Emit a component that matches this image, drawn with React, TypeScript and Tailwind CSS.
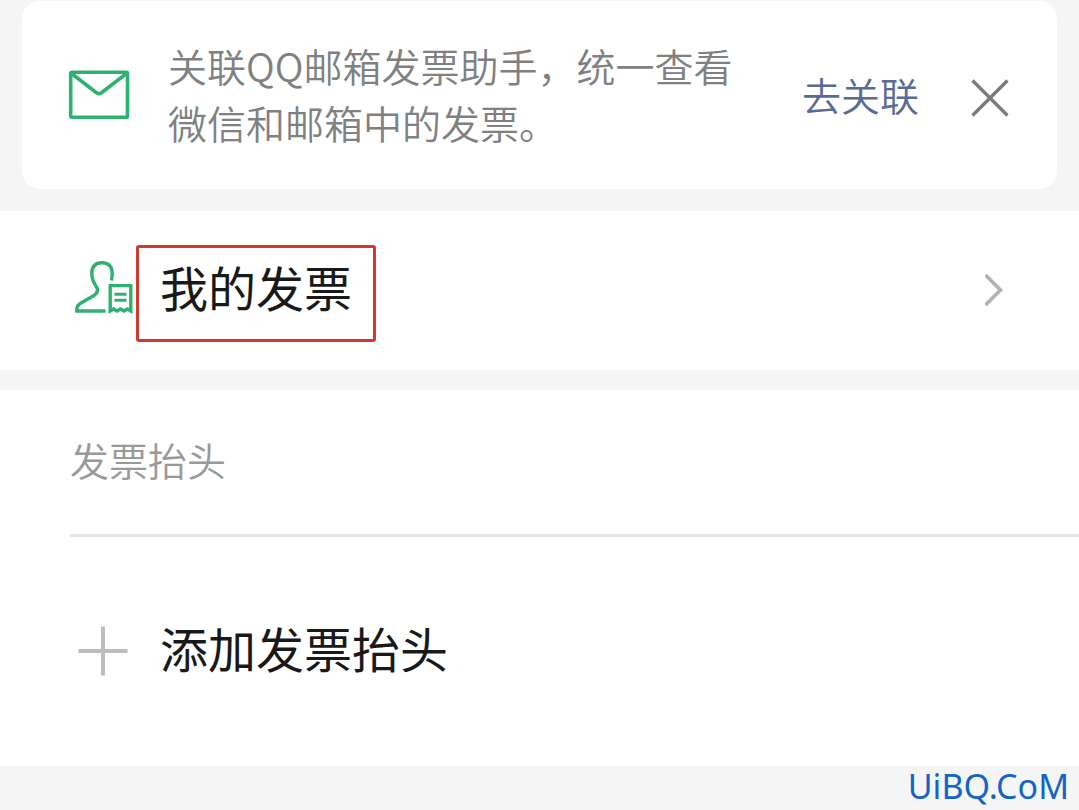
import React from 'react';

function MailIcon() {
  return (
    <svg className="w-[62px] h-[54px] shrink-0" viewBox="0 -3 62 54" fill="none" stroke="#2fb271" strokeWidth="3.6" strokeLinejoin="round" strokeLinecap="round" aria-hidden="true">
      <rect x="2.7" y="2.2" width="56.8" height="45" rx="1" />
      <path d="M3.5 3.5 L28.5 22.7 Q31 24.5 33.5 22.7 L58.5 3.5" />
    </svg>
  );
}

function PersonInvoiceIcon() {
  return (
    <svg className="w-[60px] h-[54px] shrink-0" viewBox="0 1 60 54" fill="none" stroke="#2fb271" strokeWidth="3.4" aria-hidden="true">
      <path d="M31.5 51 H2.8 C2.2 47 4 44.8 7 43 L20 35.5 C24 32.5 24.5 30 22.5 27 C19.5 22.5 17.8 19 17.8 13.5 C17.8 6 22 2.7 28 2.7 C34.5 2.7 38.2 6.5 38.2 13 C38.2 15.5 38 18 37.5 20.5" />
      <path d="M36.2 51 V25.6 H56.8 V51 L53.4 49 L50 51 L46.5 49 L43.1 51 L39.6 49 Z" />
      <path d="M40.5 34.2 H52.5 M40.5 40.2 H52.5" strokeWidth="3" />
    </svg>
  );
}

function App() {
  return (
    <div className="min-h-screen bg-[#f5f5f5] pt-px font-['Noto_Sans_CJK_SC',sans-serif]">
      <section className="mx-[22px] flex items-center rounded-[18px] bg-white pl-[46px] pr-[47px] pt-9 pb-[38px]">
        <MailIcon />
        <p className="ml-[38px] flex-1 text-[39px] leading-[57px] font-[350] text-[#808080]">
          关联QQ邮箱发票助手，统一查看
          <br />
          微信和邮箱中的发票。
        </p>
        <a href="#link" className="text-[39px] leading-[57px] font-[350] text-[#576b95]">去关联</a>
        <button type="button" aria-label="关闭" className="ml-[51px] pt-2">
          <svg className="w-10 h-10" viewBox="0 0 40 40" fill="none" stroke="#7a7a7a" strokeWidth="3.2" aria-hidden="true">
            <path d="M2.5 2.5 L37.5 37.5 M37.5 2.5 L2.5 37.5" />
          </svg>
        </button>
      </section>

      <a href="#invoices" className="mt-[22px] flex items-center bg-white px-[74px] pt-[34px] pb-7">
        <span className="pb-3">
          <PersonInvoiceIcon />
        </span>
        <span className="ml-0.5 rounded-[3px] border-[3px] border-[#d5372e] px-[21px] pt-[5px] pb-5 text-[48px] leading-[66px] text-[#191919]">
          我的发票
        </span>
        <span className="ml-auto pb-2">
          <svg className="w-5 h-9" viewBox="0 0 20 36" fill="none" stroke="#b2b2b2" strokeWidth="3.6" aria-hidden="true">
            <path d="M0.5 3 L15.5 18 L0.5 33" />
          </svg>
        </span>
      </a>

      <section className="mt-5 bg-white pl-[70px]">
        <h2 className="border-b-[3px] border-[#e5e5e5] pt-[41px] pb-[46px] text-[39px] leading-[57px] font-[350] text-[#999999]">
          发票抬头
        </h2>
        <button type="button" className="flex w-full items-center pl-2 pt-[77px] pb-[78px] text-[48px] leading-[66px] text-[#191919]">
          <svg className="mr-8 w-[50px] h-[50px]" viewBox="0 0 50 50" fill="none" stroke="#bdbdbd" strokeWidth="4" aria-hidden="true">
            <path d="M25 0.5 V49.5 M0.5 25 H49.5" />
          </svg>
          <span className="pb-2">添加发票抬头</span>
        </button>
      </section>

      <footer className="flex justify-end pr-2.5 font-['Noto_Sans',sans-serif] text-[34px] leading-[40px] text-[#1464c8]">
        UiBQ.CoM
      </footer>
    </div>
  );
}

export default App;
